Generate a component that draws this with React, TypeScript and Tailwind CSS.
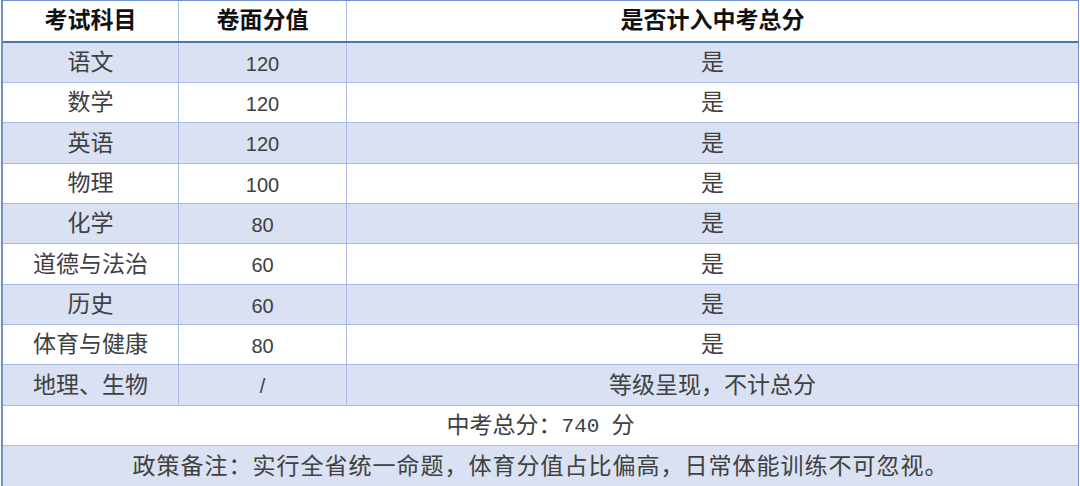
import React from 'react';

type Row = { subject: string; score: string; counted: string; shaded: boolean };

const rows: Row[] = [
  { subject: '语文', score: '120', counted: '是', shaded: true },
  { subject: '数学', score: '120', counted: '是', shaded: false },
  { subject: '英语', score: '120', counted: '是', shaded: true },
  { subject: '物理', score: '100', counted: '是', shaded: false },
  { subject: '化学', score: '80', counted: '是', shaded: true },
  { subject: '道德与法治', score: '60', counted: '是', shaded: false },
  { subject: '历史', score: '60', counted: '是', shaded: true },
  { subject: '体育与健康', score: '80', counted: '是', shaded: false },
  { subject: '地理、生物', score: '/', counted: '等级呈现，不计总分', shaded: true },
];

// row heights measured off the reference (bottom line included)
const heights = ['h-[40px]', 'h-[40px]', 'h-[41px]', 'h-[40px]', 'h-[40px]', 'h-[41px]', 'h-[40px]', 'h-[40px]', 'h-[41px]'];

const serif = { fontFamily: '"Liberation Serif", "Noto Sans CJK SC", serif' };

export default function App() {
  return (
    <div className="w-[1080px] h-[486px] bg-white overflow-hidden" style={serif}>
      <div className="w-[1078px] ml-[1px] border-l-2 border-r border-t border-[#6f8fd0] text-[#404040]">
        {/* Header */}
        <div className="flex h-[42px] border-b-2 border-[#4a72c4] font-bold text-[23px] text-[#111]">
          <div className="w-[176px] flex items-center justify-center border-r border-[#a7bbe5] pt-[1px]">考试科目</div>
          <div className="w-[168px] flex items-center justify-center border-r border-[#a7bbe5] pt-[1px]">卷面分值</div>
          <div className="flex-1 flex items-center justify-center pt-[1px]">是否计入中考总分</div>
        </div>

        {rows.map((r, i) => (
          <div
            key={r.subject}
            className={`flex ${heights[i]} border-b border-[#a7bbe5] text-[23px] ${r.shaded ? 'bg-[#d9e1f3]' : 'bg-white'}`}
          >
            <div className="w-[176px] flex items-center justify-center border-r border-[#a7bbe5] pt-[2px]">{r.subject}</div>
            <div
              className="w-[168px] flex items-center justify-center border-r border-[#a7bbe5] text-[20px] pt-[2px]"
              style={{ fontFamily: '"Liberation Sans", "Noto Sans CJK SC", sans-serif' }}
            >
              {r.score}
            </div>
            <div className="flex-1 flex items-center justify-center pt-[2px]">{r.counted}</div>
          </div>
        ))}

        {/* Total */}
        <div className="flex h-[40px] border-b border-[#a7bbe5] items-center justify-center text-[23px] bg-white pt-[2px]">
          <span>中考总分：</span>
          <span className="text-[21px]" style={{ fontFamily: '"Liberation Mono", monospace' }}>740</span>
          <span className="ml-[12px]">分</span>
        </div>

        {/* Note */}
        <div className="flex h-[41px] border-b border-[#6f8fd0] items-center justify-center text-[23px] bg-[#d9e1f3] tracking-[1px] pt-[2px]">
          政策备注：实行全省统一命题，体育分值占比偏高，日常体能训练不可忽视。
        </div>
      </div>
    </div>
  );
}
